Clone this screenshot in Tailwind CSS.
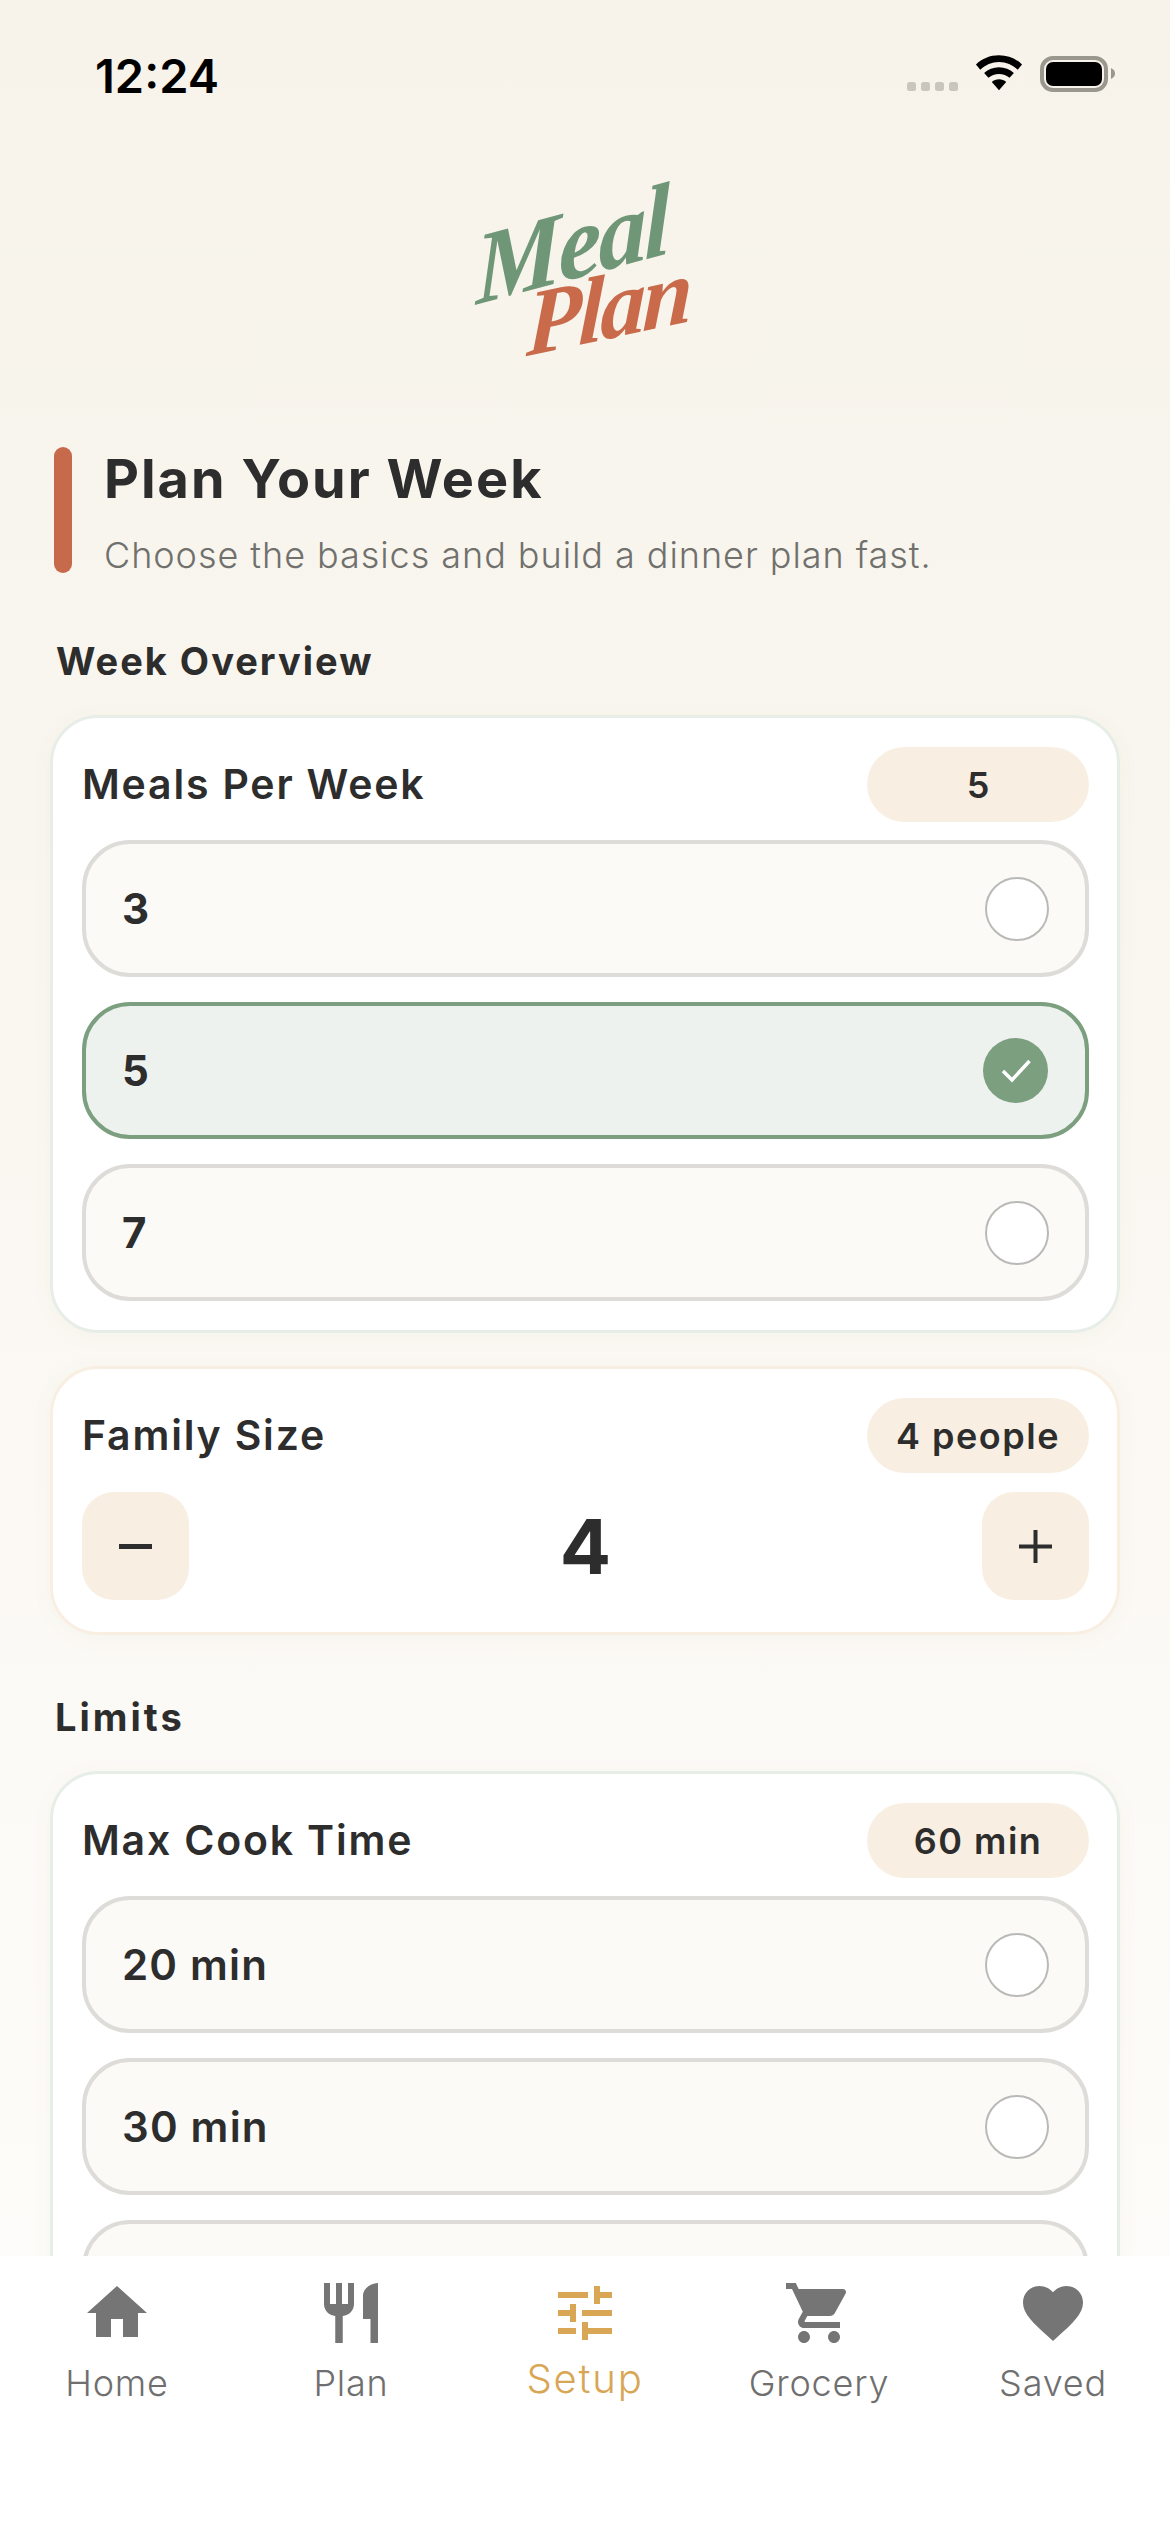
<!DOCTYPE html>
<html><head><meta charset="utf-8">
<script src="https://cdn.jsdelivr.net/npm/@tailwindcss/browser@4"></script>
</head>
<body class="m-0">
<div class="relative w-[1170px] h-[2532px] overflow-hidden bg-gradient-to-b from-[#f7f3ea] to-[#fefdfb] font-['Inter',sans-serif] text-[#2d2d2d]">
  <!-- status bar -->
  <div class="flex items-start justify-between h-[115px] pl-[95px] pr-[55px] pt-[50px]">
    <span class="text-[47px] leading-[52px] font-semibold text-black">12:24</span>
    <div class="flex items-start gap-[17px] pt-[5px]">
      <svg width="51" height="9" class="mt-[27px]" viewBox="0 0 51 9" fill="#c9c6be"><rect x="0" y="0" width="9" height="9" rx="2.500"/><rect x="14" y="0" width="9" height="9" rx="2.500"/><rect x="28" y="0" width="9" height="9" rx="2.500"/><rect x="42" y="0" width="9" height="9" rx="2.500"/></svg>
      <svg width="48" height="37" viewBox="0 0 50 38" fill="black"><path d="M25 0C15.500 0 7.500 3.500 1 9.500L5.500 15C10.800 10 17.500 7 25 7S39.200 10 44.500 15L49 9.500C42.500 3.500 34.500 0 25 0Z"/><path d="M25 12.500C19 12.500 13.800 14.800 9.500 18.500L14 23.500C17 21 20.800 19.500 25 19.500S33 21 36 23.500L40.500 18.500C36.200 14.800 31 12.500 25 12.500Z"/><path d="M25 25C22 25 19.500 26 17.500 27.800L25 36.500L32.500 27.800C30.500 26 28 25 25 25Z"/></svg>
      <svg width="75" height="36" viewBox="0 0 75 36" class="mt-[1px]"><rect x="2" y="2" width="64" height="32" rx="11" fill="none" stroke="#9a978f" stroke-width="4"/><rect x="6" y="6" width="56" height="24" rx="7" fill="black"/><path d="M71 12C74 13.500 75 15.500 75 17.500S74 21.500 71 23Z" fill="#9a978f"/></svg>
    </div>
  </div>
  <!-- logo: real text, tilted -->
  <div class="flex flex-col items-center h-[332px] font-['Liberation_Serif',serif] italic font-bold leading-none">
    <span class="mt-[80px] -ml-[26px] -rotate-[15deg] -skew-x-[14deg] text-[100px] tracking-[-3px] text-[#6f9777]">Meal</span>
    <span class="-mt-[34px] ml-[46px] -rotate-[12deg] -skew-x-[14deg] text-[92px] tracking-[-3px] text-[#c96b4b]">Plan</span>
  </div>
  <!-- heading -->
  <div class="flex gap-[32px] pl-[54px]">
    <div class="w-[18px] h-[126px] rounded-full bg-[#c7694b]"></div>
    <div>
      <h1 class="text-[54px] leading-[60px] font-bold tracking-[2px] pt-[2px]">Plan Your Week</h1>
      <p class="text-[36px] leading-[44px] tracking-[0.950px] font-light text-[#70706d] mt-[24px]">Choose the basics and build a dinner plan fast.</p>
    </div>
  </div>
  <h2 class="ml-[56px] mt-[60px] text-[38px] leading-[48px] font-bold tracking-[2px]">Week Overview</h2>
  <!-- meals card -->
  <section class="mx-[50px] mt-[30px] rounded-[48px] border-[3px] border-[#e7eee8] bg-white pl-[29px] pr-[28px] pt-[29px] pb-[29px] flex flex-col gap-[25px] shadow-[0_4px_24px_rgba(120,100,60,0.04)]">
    <div class="flex items-center justify-between -mb-[7px]">
      <span class="text-[41px] font-semibold tracking-[1.800px]">Meals Per Week</span>
      <span class="w-[222px] h-[75px] rounded-full bg-[#f8efe2] flex items-center justify-center text-[36px] font-semibold">5</span>
    </div>
    <div class="h-[137px] rounded-[48px] border-[4px] border-[#dedcd8] bg-[#fbfaf6] flex items-center justify-between pl-[36px] pr-[36px] text-[42px] font-bold"><span>3</span><span class="w-[64px] h-[64px] rounded-full border-[2px] border-[#b9b9b7] bg-white"></span></div>
    <div class="h-[137px] rounded-[48px] border-[4px] border-[#7c9f80] bg-[#eef2ee] flex items-center justify-between pl-[36px] pr-[37px] text-[42px] font-bold"><span>5</span><span class="w-[65px] h-[65px] rounded-full bg-[#7c9f80] flex items-center justify-center"><svg width="30" height="24" viewBox="0 0 30 24" fill="none" stroke="white" stroke-width="3.500"><path d="M2 12L11 21L28.500 2"/></svg></span></div>
    <div class="h-[137px] rounded-[48px] border-[4px] border-[#dedcd8] bg-[#fbfaf6] flex items-center justify-between pl-[36px] pr-[36px] text-[42px] font-bold"><span>7</span><span class="w-[64px] h-[64px] rounded-full border-[2px] border-[#b9b9b7] bg-white"></span></div>
  </section>
  <!-- family card -->
  <section class="mx-[50px] mt-[33px] h-[269px] rounded-[48px] border-[3px] border-[#f8efe2] bg-white pl-[29px] pr-[28px] pt-[29px] shadow-[0_4px_24px_rgba(120,100,60,0.04)]">
    <div class="flex items-center justify-between">
      <span class="text-[41px] font-semibold tracking-[1.800px]">Family Size</span>
      <span class="w-[222px] h-[75px] rounded-full bg-[#f8efe2] flex items-center justify-center text-[36px] font-semibold tracking-[1.500px]">4 people</span>
    </div>
    <div class="flex items-center justify-between mt-[19px]">
      <span class="w-[107px] h-[108px] rounded-[32px] bg-[#f8efe2] flex items-center justify-center"><svg width="33" height="5" fill="#2d2d2d"><rect width="33" height="5"/></svg></span>
      <span class="text-[76px] font-bold leading-none">4</span>
      <span class="w-[107px] h-[108px] rounded-[32px] bg-[#f8efe2] flex items-center justify-center"><svg width="33" height="33" fill="#2d2d2d"><rect y="14.500" width="33" height="4"/><rect x="14.500" width="4" height="33"/></svg></span>
    </div>
  </section>
  <h2 class="ml-[55px] mt-[58px] text-[38px] leading-[48px] font-bold tracking-[3px]">Limits</h2>
  <!-- limits card -->
  <section class="mx-[50px] mt-[30px] rounded-[48px] border-[3px] border-[#e7eee8] bg-white pl-[29px] pr-[28px] pt-[29px] flex flex-col gap-[25px] shadow-[0_4px_24px_rgba(120,100,60,0.04)]">
    <div class="flex items-center justify-between -mb-[7px]">
      <span class="text-[41px] font-semibold tracking-[1.800px]">Max Cook Time</span>
      <span class="w-[222px] h-[75px] rounded-full bg-[#f8efe2] flex items-center justify-center text-[36px] font-semibold tracking-[1.500px]">60 min</span>
    </div>
    <div class="h-[137px] rounded-[48px] border-[4px] border-[#dedcd8] bg-[#fbfaf6] flex items-center justify-between pl-[36px] pr-[36px] text-[42px] font-semibold tracking-[1.200px]"><span>20 min</span><span class="w-[64px] h-[64px] rounded-full border-[2px] border-[#b9b9b7] bg-white"></span></div>
    <div class="h-[137px] rounded-[48px] border-[4px] border-[#dedcd8] bg-[#fbfaf6] flex items-center justify-between pl-[36px] pr-[36px] text-[42px] font-semibold tracking-[1.200px]"><span>30 min</span><span class="w-[64px] h-[64px] rounded-full border-[2px] border-[#b9b9b7] bg-white"></span></div>
    <div class="h-[137px] rounded-[48px] border-[4px] border-[#dedcd8] bg-[#fbfaf6]"></div>
  </section>
  <!-- tab bar -->
  <nav class="absolute left-0 right-0 bottom-0 h-[276px] bg-white grid grid-cols-5 items-start pt-[21px] text-[36px] leading-[44px] tracking-[0.800px] font-light text-[#6f6f6f] text-center">
    <div class="flex flex-col items-center"><svg width="72" height="72" viewBox="0 0 24 24" fill="#757575"><path d="M10 20v-6h4v6h5v-8h3L12 3 2 12h3v8z"/></svg><span class="mt-[12px]">Home</span></div>
    <div class="flex flex-col items-center"><svg width="72" height="72" viewBox="0 0 24 24" fill="#757575"><path d="M11 9H9V2H7v7H5V2H3v7c0 2.120 1.660 3.840 3.750 3.970V22h2.500v-9.030C11.340 12.840 13 11.120 13 9V2h-2v7zm5-3v8h2.500v8H21V2c-2.760 0-5 2.240-5 4z"/></svg><span class="mt-[12px]">Plan</span></div>
    <div class="flex flex-col items-center text-[#d9a655] text-[40px] tracking-[1.800px]"><svg width="72" height="72" viewBox="0 0 24 24" fill="#d9a655"><path d="M3 17v2h6v-2H3zM3 5v2h10V5H3zm10 16v-2h8v-2h-8v-2h-2v6h2zM7 9v2H3v2h4v2h2V9H7zm14 4v-2H11v2h10zm-6-4h2V7h4V5h-4V3h-2v6z"/></svg><span class="mt-[8px]">Setup</span></div>
    <div class="flex flex-col items-center"><svg width="72" height="72" viewBox="0 0 24 24" fill="#757575"><path d="M7 18c-1.100 0-1.990.9-1.990 2S5.900 22 7 22s2-.9 2-2-.9-2-2-2zM1 2v2h2l3.600 7.590-1.350 2.450c-.16.280-.25.610-.25.960 0 1.100.9 2 2 2h12v-2H7.420c-.14 0-.25-.11-.25-.25l.03-.12.9-1.630h7.450c.750 0 1.410-.41 1.750-1.030l3.580-6.490c.080-.14.120-.31.120-.48 0-.55-.45-1-1-1H5.210l-.94-2H1zm16 16c-1.100 0-1.990.9-1.990 2s.89 2 1.990 2 2-.9 2-2-.9-2-2-2z"/></svg><span class="mt-[12px]">Grocery</span></div>
    <div class="flex flex-col items-center"><svg width="72" height="72" viewBox="0 0 24 24" fill="#757575"><path d="M12 21.350l-1.450-1.320C5.400 15.360 2 12.280 2 8.500 2 5.420 4.420 3 7.500 3c1.740 0 3.410.81 4.500 2.090C13.090 3.810 14.760 3 16.500 3 19.580 3 22 5.420 22 8.500c0 3.780-3.400 6.860-8.550 11.540L12 21.350z"/></svg><span class="mt-[12px]">Saved</span></div>
  </nav>
</div>
</body></html>
